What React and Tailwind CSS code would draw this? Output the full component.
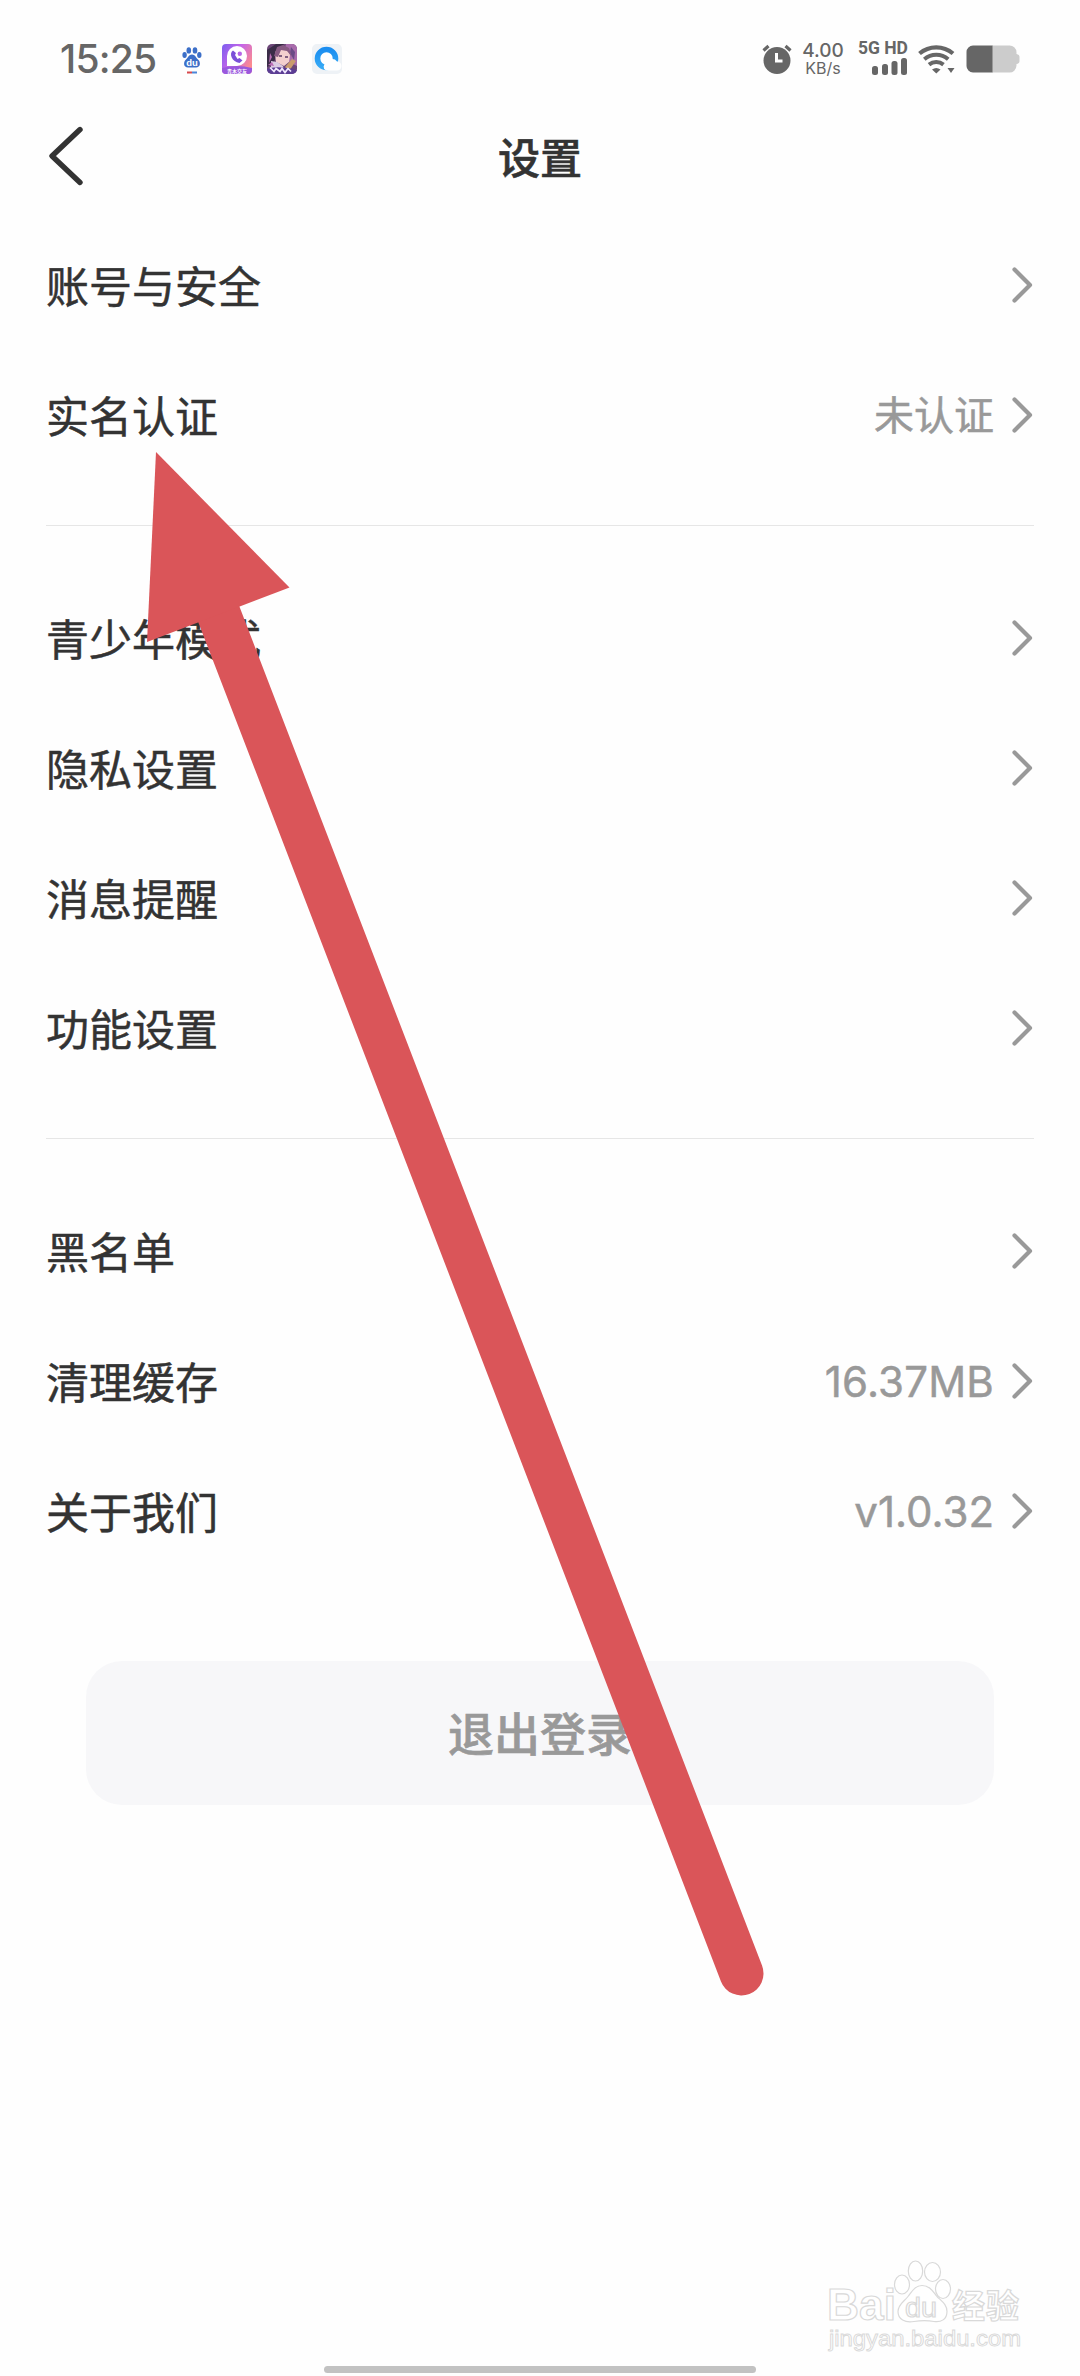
import React from "react";

const groups = [
  [
    { label: "账号与安全" },
    { label: "实名认证", value: "未认证", valueClass: "text-[40px]" },
  ],
  [
    { label: "青少年模式" },
    { label: "隐私设置" },
    { label: "消息提醒" },
    { label: "功能设置" },
  ],
  [
    { label: "黑名单" },
    {
      label: "清理缓存",
      value: "16.37MB",
      valueClass: "text-[42px] tracking-[0.2px]",
    },
    { label: "关于我们", value: "v1.0.32", valueClass: "text-[42px]" },
  ],
];

const BaiduIcon = () => (
  <svg width="20" height="28" viewBox="0 0 20 28" fill="#3c6fc8">
    <ellipse cx="2.6" cy="9" rx="2.2" ry="2.9" />
    <ellipse cx="6.8" cy="4.4" rx="2.3" ry="3.2" />
    <ellipse cx="13" cy="4.4" rx="2.3" ry="3.2" />
    <ellipse cx="17.3" cy="9" rx="2.2" ry="2.9" />
    <path d="M10 8.500c3 0 4 3 6 5 3 2.500 2.500 8-2 8H6c-4.500 0-5-5.500-2-8 2-2 3-5 6-5z" />
    <text
      x="10"
      y="19.500"
      textAnchor="middle"
      fill="#fff"
      className="font-['Liberation_Sans'] text-[9.500px] font-bold"
    >
      du
    </text>
    <rect x="5" y="25.500" width="5" height="2" fill="#d8484c" />
    <rect x="10" y="25.500" width="5" height="2" fill="#4a86d8" />
  </svg>
);

const CallIcon = () => (
  <svg width="30" height="30" viewBox="0 0 30 30">
    <defs>
      <linearGradient id="call" x1="0" y1="0" x2="1" y2="0.600">
        <stop offset="0" stopColor="#7a5df0" />
        <stop offset="0.500" stopColor="#c565e8" />
        <stop offset="1" stopColor="#fb8a90" />
      </linearGradient>
    </defs>
    <rect width="30" height="30" rx="4" fill="url(#call)" />
    <path d="M5 22V12a10 10 0 1 1 10 10z" fill="#fff" />
    <path
      d="M11 6.500c-4.500 3-1 11.500 6.500 12.500l3-2.500-3-2.500-2 1-2.500-4 1-2z"
      fill="#7a50d8"
    />
    <circle cx="17.800" cy="9.800" r="2.200" fill="#b565e8" />
    <path d="M0 24q15-4 30 0v2a4 4 0 0 1-4 4H4a4 4 0 0 1-4-4z" fill="#9a58dd" />
    <text
      x="15"
      y="28.500"
      textAnchor="middle"
      fill="#fff"
      className="font-['Noto_Sans_CJK_SC'] text-[5px] font-bold"
    >
      青木交友
    </text>
  </svg>
);

const GameIcon = () => (
  <svg width="30" height="30" viewBox="0 0 30 30">
    <clipPath id="game">
      <rect width="30" height="30" rx="5" />
    </clipPath>
    <g clipPath="url(#game)">
      <rect width="30" height="30" fill="#6b4677" />
      <path d="M19 0h11v22l-8-4-5-9z" fill="#a86bab" />
      <path d="M24 3l4 5-1 8-4-7z" fill="#6a4a86" />
      <path d="M0 6l9-6h8l-6 8-5 12-6 3z" fill="#3a2c47" />
      <path d="M8 10q1-7 8-7 6 1 7 8l-1 7-5 4-8-4z" fill="#f3cfce" />
      <path d="M7 12l3-9 6-2 6 3 3 9-5-6-6-1-3 7z" fill="#875a82" />
      <path d="M12 12h3M18 13h3" stroke="#5b3a66" strokeWidth="1.300" />
      <path d="M4 17l6 1 6 4 1 4-13-1z" fill="#dccbe2" />
      <path d="M3 9l2 4-3 6zM1 21l4-3 2 4z" fill="#b96cb4" />
      <path d="M18 23l7-8 4 2-7 10z" fill="#c99b6c" />
      <path d="M0 25q10-4 30 1v4H0z" fill="#5b3d94" />
      <path
        d="M3 23.500l4 4 2-3 4 3 2-3 3 4 3-4 3 3"
        fill="none"
        stroke="#f1e8ff"
        strokeWidth="1.700"
      />
    </g>
  </svg>
);

const BrowserIcon = () => (
  <svg width="30" height="30" viewBox="0 0 30 30">
    <defs>
      <linearGradient id="ring" x1="0" y1="0" x2="0" y2="1">
        <stop offset="0" stopColor="#1b8ef0" />
        <stop offset="1" stopColor="#36aaf6" />
      </linearGradient>
    </defs>
    <rect width="30" height="30" rx="5" fill="#eef2f6" />
    <circle
      cx="14.500"
      cy="14.500"
      r="9"
      fill="#fff"
      stroke="url(#ring)"
      strokeWidth="5.600"
    />
    <path
      d="M14 26.500a4 4 0 0 1 .5-7.500 6 6 0 0 1 10.500-1.500 4.500 4.500 0 0 1 0 9z"
      fill="#fff"
    />
  </svg>
);

const AlarmIcon = () => (
  <svg width="30" height="30" viewBox="0 0 30 30" fill="none">
    <circle cx="15" cy="16.500" r="13.500" fill="#666" />
    <path
      d="M1.500 6.500l5-4.500M28.500 6.500l-5-4.500"
      stroke="#666"
      strokeWidth="3.200"
    />
    <path d="M14.500 9v8h6" stroke="#fff" strokeWidth="3" />
  </svg>
);

const SignalIcon = () => (
  <svg width="36" height="18" viewBox="0 0 36 18" fill="#666">
    <rect x="0" y="9" width="6" height="9" rx="2.500" />
    <rect x="10" y="7" width="6" height="11" rx="2.500" />
    <rect x="19.500" y="4" width="6" height="14" rx="2.500" />
    <rect x="29" y="1" width="6" height="17" rx="2.500" />
  </svg>
);

const WifiIcon = () => (
  <svg width="38" height="30" viewBox="0 0 38 30" fill="none" stroke="#666">
    <path d="M1.500 9.500a26 26 0 0 1 33.500 0" strokeWidth="4.200" />
    <path d="M6.300 15.200a18.500 18.500 0 0 1 23.900 0" strokeWidth="4" />
    <path d="M11 20.600a11.500 11.500 0 0 1 14.500 0" strokeWidth="4" />
    <path d="M14 25.500q4.200-3 8.500 0L18.300 29.500z" fill="#666" stroke="none" />
    <path d="M29.500 24h7L33 29z" fill="#666" stroke="none" />
  </svg>
);

const BatteryIcon = () => (
  <svg width="54" height="28" viewBox="0 0 54 28">
    <path
      d="M26 0.500h17a7 7 0 0 1 7.500 7v1.500q3 .5 3 3v4q0 2.500-3 3v1.500a7 7 0 0 1-7.500 7H26z"
      fill="#ccc"
    />
    <path
      d="M26.500 0.500v27H7a6.500 6.500 0 0 1-6.500-6.500V7A6.500 6.500 0 0 1 7 .5z"
      fill="#666"
    />
  </svg>
);

const StatusBar = () => (
  <div className="flex h-[116px] items-start justify-between pl-[60px] pr-[60px] pt-[38px] text-[#666]">
    <div className="flex items-start">
      <span className="w-[122px] whitespace-nowrap font-['Inter'] text-[39px] font-medium leading-[41px] tracking-[-0.8px]">
        15:25
      </span>
      <div className="flex items-center gap-[15px] pt-[5px]">
        <div className="mr-[5px] pt-[3px]">
          <BaiduIcon />
        </div>
        <CallIcon />
        <GameIcon />
        <BrowserIcon />
      </div>
    </div>
    <div className="flex items-start">
      <div className="mr-[10px] pt-[6px]">
        <AlarmIcon />
      </div>
      <div className="mr-[14px] flex w-[42px] flex-col items-center pt-[4px] font-['Inter']">
        <span className="text-[19px] font-medium leading-[18px]">4.00</span>
        <span className="text-[16px] leading-[16px]">KB/s</span>
      </div>
      <div className="mr-[10px] flex w-[50px] flex-col items-end pt-[1px]">
        <span className="whitespace-nowrap font-['Roboto'] text-[17.500px] font-bold leading-[18px]">
          5G HD
        </span>
        <SignalIcon />
      </div>
      <div className="mr-[10px] pt-[6px]">
        <WifiIcon />
      </div>
      <div className="pt-[7px]">
        <BatteryIcon />
      </div>
    </div>
  </div>
);

const Header = () => (
  <header className="grid h-[80px] grid-cols-3 items-center px-[46px]">
    <svg width="40" height="62" viewBox="0 0 40 62" fill="none">
      <path
        d="M34 4.500L6 31l28 26.500"
        stroke="#333"
        strokeWidth="5.400"
        strokeLinecap="round"
        strokeLinejoin="round"
      />
    </svg>
    <h1 className="text-center text-[42px] font-medium leading-[60px] [-webkit-text-stroke:0.6px_#333]">
      设置
    </h1>
  </header>
);

const Row = ({ label, value, valueClass }) => (
  <li className="flex h-[130px] items-center justify-between">
    <span className="pb-[3px] text-[43px] leading-[60px] [-webkit-text-stroke:0.5px_#333]">
      {label}
    </span>
    <div className="flex items-center gap-[18px] text-[#999]">
      {value && (
        <span
          className={`pt-px font-['Inter','Noto_Sans_CJK_SC',sans-serif] leading-[60px] [-webkit-text-stroke:0.5px_#999] ${valueClass}`}
        >
          {value}
        </span>
      )}
      <svg width="22" height="36" viewBox="0 0 22 36" fill="none">
        <path
          d="M2.500 2.500L18 18 2.500 33.500"
          stroke="#999"
          strokeWidth="4.200"
          strokeLinecap="round"
          strokeLinejoin="round"
        />
      </svg>
    </div>
  </li>
);

// Red pointer drawn on top of the list
const Arrow = () => (
  <svg
    className="pointer-events-none absolute left-0 top-0"
    width="1080"
    height="2376"
    viewBox="0 0 1080 2376"
  >
    <path
      d="M218.700 614L741.500 1973.500"
      stroke="#da5559"
      strokeWidth="44"
      strokeLinecap="round"
    />
    <path d="M156 452L289.500 587.500 147 642z" fill="#da5559" />
  </svg>
);

const Watermark = () => (
  <svg
    className="pointer-events-none absolute bottom-0 right-0"
    width="300"
    height="156"
    viewBox="0 0 300 156"
    fill="#fff"
    stroke="#d9d9d9"
    strokeWidth="1.200"
  >
    <text
      x="47"
      y="100"
      textLength="69"
      lengthAdjust="spacingAndGlyphs"
      className="font-['Liberation_Sans'] text-[45px] font-bold"
    >
      Bai
    </text>
    <ellipse cx="122" cy="64.500" rx="7.500" ry="9.500" />
    <ellipse cx="135.500" cy="51" rx="7.200" ry="10" />
    <ellipse cx="152.500" cy="52" rx="8" ry="9.500" />
    <ellipse cx="163" cy="69" rx="7.500" ry="9.500" />
    <path d="M142 65.500c8 0 11 6 15 11 5 5 10 8 10 15 0 8-6 11-13 10-8-1.500-14-1-20 0-9 1.500-16-2-16-10 0-7 6-10 10-15s7-11 14-11z" />
    <text
      x="125"
      y="97"
      textLength="32"
      lengthAdjust="spacingAndGlyphs"
      className="font-['Liberation_Sans'] text-[27px]"
    >
      du
    </text>
    <text
      x="172"
      y="98"
      textLength="67"
      className="font-['Noto_Sans_CJK_SC'] text-[33px] font-bold"
    >
      经验
    </text>
    <text
      x="49"
      y="126"
      textLength="192"
      lengthAdjust="spacingAndGlyphs"
      strokeWidth="0.900"
      className="font-['Liberation_Sans'] text-[22px]"
    >
      jingyan.baidu.com
    </text>
  </svg>
);

const App = () => {
  return (
    <div className="relative flex h-[2376px] w-[1080px] flex-col overflow-hidden bg-[#fefefe] font-['Noto_Sans_CJK_SC',sans-serif] text-[#333]">
      <StatusBar />
      <Header />
      <main className="flex-1 px-[46px] pt-[24px]">
        {groups.map((rows, i) => (
          <section key={i}>
            {i > 0 && <hr className="mb-[47px] mt-[45px] border-[#e6e6e6]" />}
            <ul>
              {rows.map((row) => (
                <Row key={row.label} {...row} />
              ))}
            </ul>
          </section>
        ))}
        <button className="mx-[40px] mt-[85px] flex h-[144px] w-[908px] items-center justify-center rounded-[36px] bg-[#f7f7f9] pb-[3px] text-[46px] font-medium text-[#999] [-webkit-text-stroke:0.6px_#999]">
          退出登录
        </button>
      </main>
      <div className="flex h-[10px] justify-center">
        <div className="h-[7px] w-[432px] rounded-full bg-[#c2c2c2]"></div>
      </div>
      <Arrow />
      <Watermark />
    </div>
  );
};

export default App;
